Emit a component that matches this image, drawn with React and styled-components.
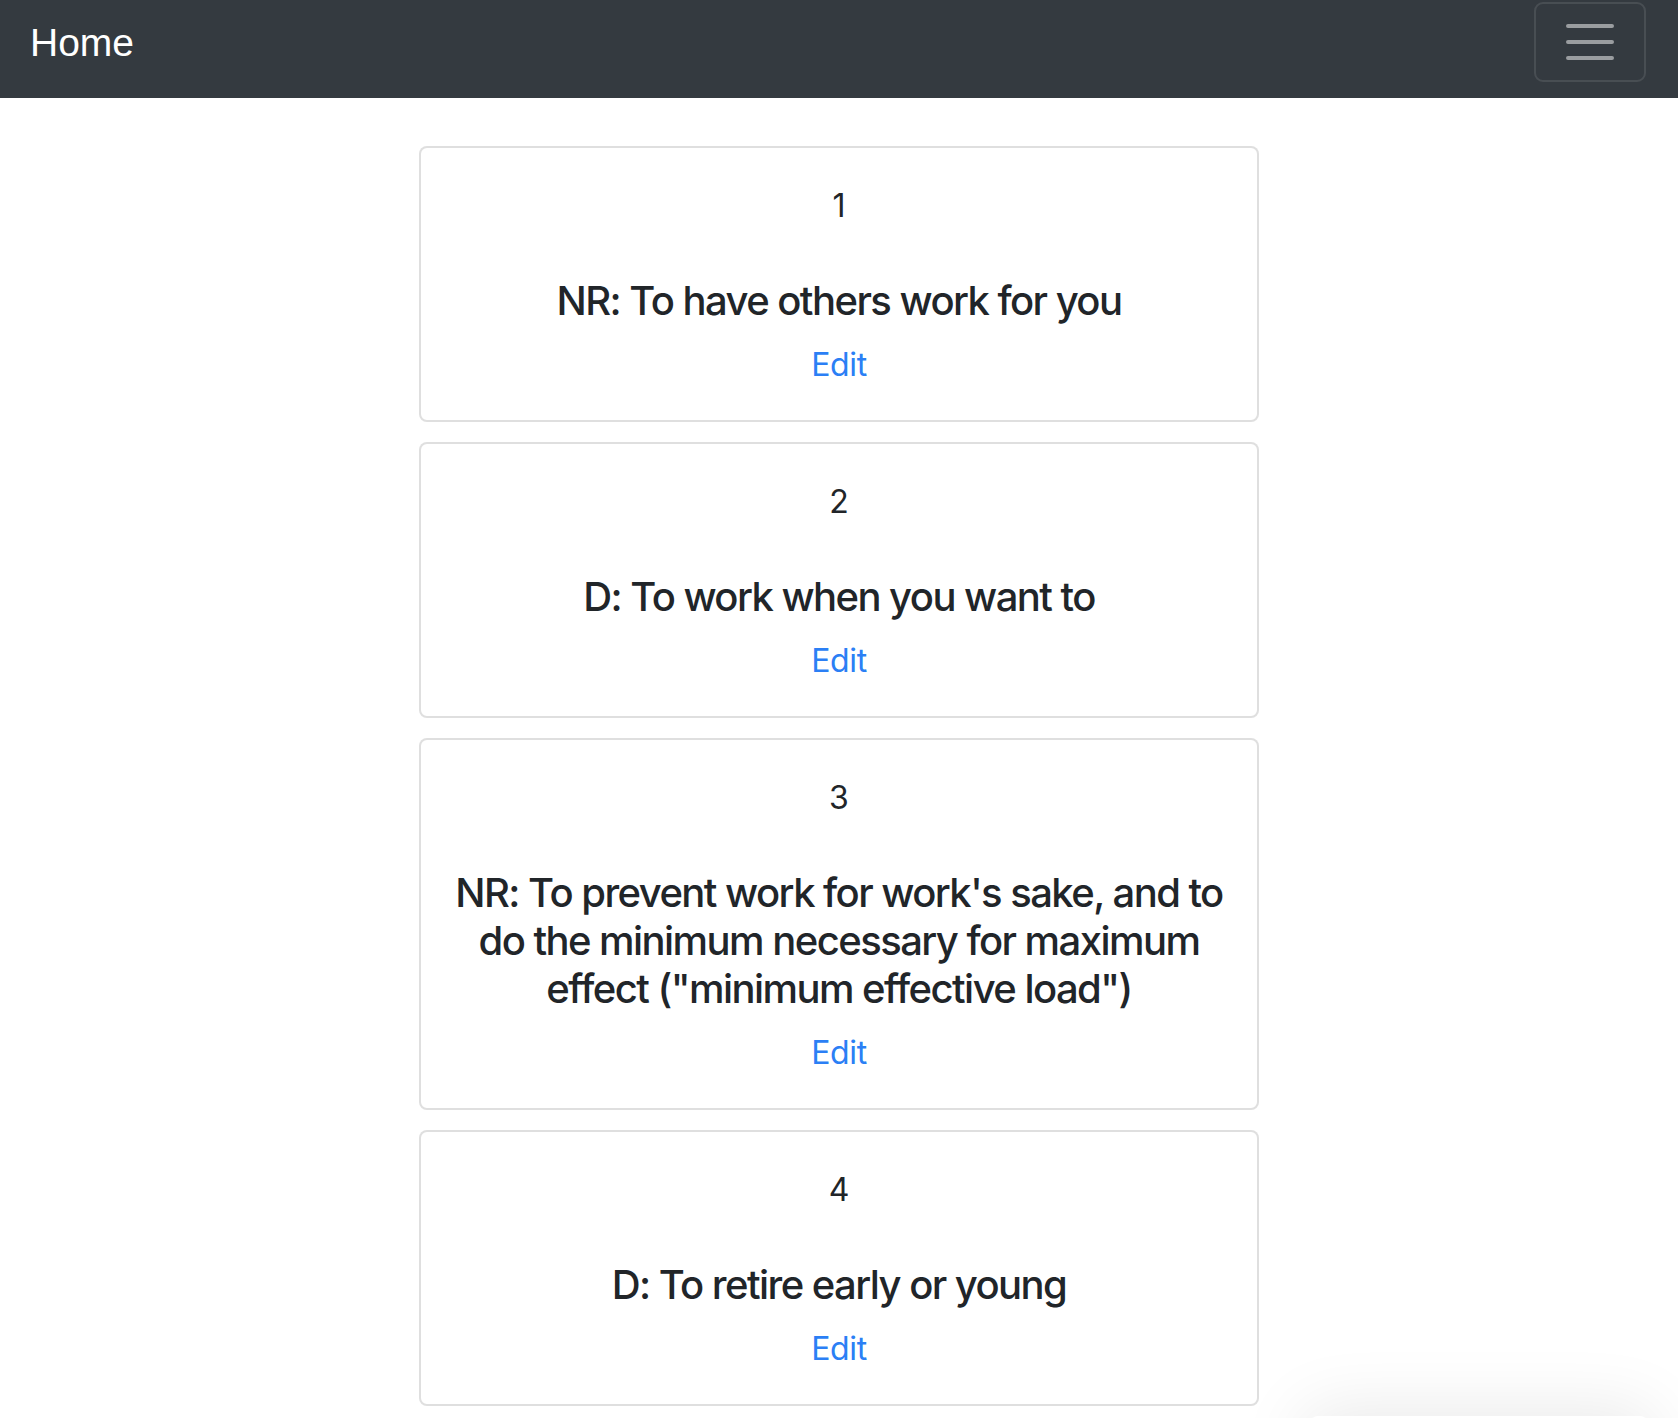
import styled, { createGlobalStyle } from 'styled-components'

const GlobalStyle = createGlobalStyle`
  html, body {
    margin: 0;
    padding: 0;
    background: #fff;
    font-family: Inter, "Noto Sans", sans-serif;
    color: #212529;
  }
`

const Navbar = styled.nav`
  display: flex;
  justify-content: space-between;
  align-items: flex-start;
  height: 98px;
  padding: 0 32px 0 30px;
  box-sizing: border-box;
  background-color: #343a40;
`

const Brand = styled.a`
  margin-top: 14px;
  font-family: "Liberation Sans", Arial, sans-serif;
  font-size: 39px;
  line-height: 58px;
  color: #fff;
  text-decoration: none;
`

const Toggler = styled.button`
  display: flex;
  align-items: center;
  justify-content: center;
  margin-top: 2px;
  width: 112px;
  height: 80px;
  padding: 8px 24px;
  box-sizing: border-box;
  background: transparent;
  border: 2px solid rgba(255, 255, 255, 0.1);
  border-radius: 9px;
  cursor: pointer;
`

const List = styled.main`
  display: flex;
  flex-direction: column;
  align-items: center;
  gap: 20px;
  padding-top: 48px;
`

const Card = styled.div`
  width: 840px;
  box-sizing: border-box;
  padding: 34px 24px 31px;
  border: 2px solid rgba(0, 0, 0, 0.125);
  border-radius: 8px;
  text-align: center;
  background: #fff;
`

const Number = styled.div`
  font-size: 32px;
  line-height: 48px;
  margin-bottom: 47px;
`

const Title = styled.h5`
  margin: 0 0 16px;
  font-size: 40px;
  font-weight: 500;
  line-height: 48px;
  letter-spacing: -1.55px;
`

const EditLink = styled.a`
  display: block;
  font-size: 32px;
  line-height: 48px;
  letter-spacing: -0.4px;
  color: #2b7ff5;
  text-decoration: none;
  cursor: pointer;
`

const Toast = styled.div`
  position: fixed;
  right: 30px;
  bottom: -80px;
  width: 338px;
  height: 82px;
  background: #fff;
  border-radius: 8px;
  box-shadow: 0 0 70px 6px rgba(0, 0, 0, 0.09);
`

const items = [
  { id: 1, text: 'NR: To have others work for you' },
  { id: 2, text: 'D: To work when you want to' },
  { id: 3, text: 'NR: To prevent work for work\'s sake, and to do the minimum necessary for maximum effect ("minimum effective load")' },
  { id: 4, text: 'D: To retire early or young' },
]

const App = () => {
  return (
    <>
      <GlobalStyle />
      <Navbar>
        <Brand href="#">Home</Brand>
        <Toggler aria-label="Toggle navigation">
          <svg width="60" height="60" viewBox="0 0 30 30">
            <path
              d="M4 7h22M4 15h22M4 23h22"
              stroke="rgba(255,255,255,0.5)"
              strokeWidth="2"
              strokeLinecap="round"
            />
          </svg>
        </Toggler>
      </Navbar>
      <List>
        {items.map((item) => (
          <Card key={item.id}>
            <Number>{item.id}</Number>
            <Title>{item.text}</Title>
            <EditLink href="#">Edit</EditLink>
          </Card>
        ))}
      </List>
      <Toast />
    </>
  )
}

export default App
